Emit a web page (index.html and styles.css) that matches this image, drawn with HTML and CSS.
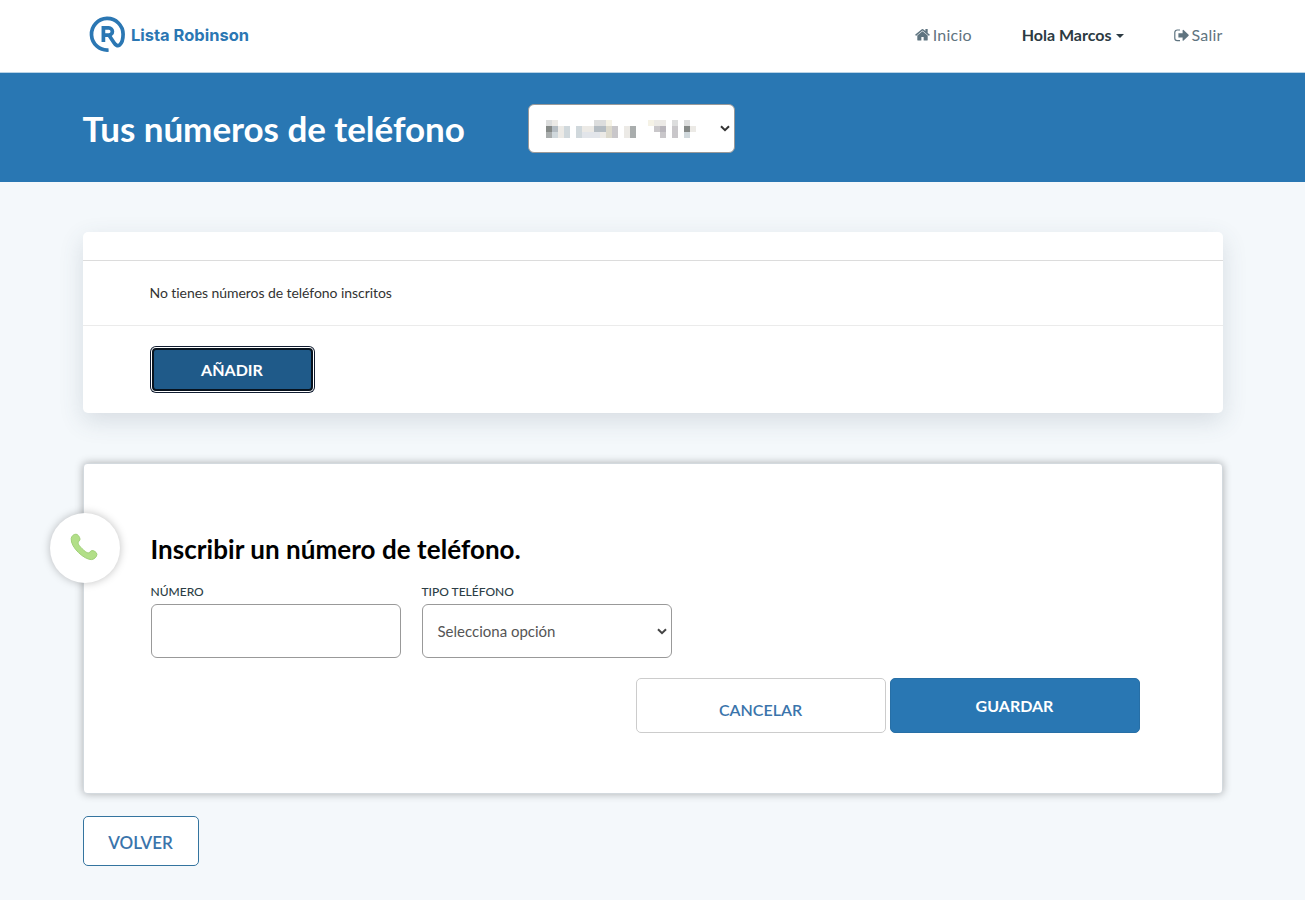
FILE: index.html
```html
<!DOCTYPE html>
<html lang="es">
<head>
 <meta charset="UTF-8">
 <meta name="viewport" content="width=device-width, initial-scale=1.0">
 <title>Lista Robinson - Tus números de teléfono</title>
 <link rel="stylesheet" href="styles.css">
</head>
<body>
<header class="navbar">
 <div class="container navbar-inner">
   <a class="brand" href="#">
     <svg width="166" height="40" viewBox="0 0 166 40">
       <path d="M19.6 36 A15.8 15.8 0 1 1 34.1 20.3 C34.1 25 32.8 29.2 30.6 31 C28.4 32.4 26.4 31 25 28.8 L20.2 21.5" fill="none" stroke="#2b77b3" stroke-width="3.7"/>
       <path d="M14.4 28 V13.9 H19.8 A3.6 3.6 0 0 1 19.8 21.1 H14.4" fill="none" stroke="#2b77b3" stroke-width="3.7"/>
       <text class="brand-text" x="42" y="27" textLength="118" lengthAdjust="spacingAndGlyphs">Lista Robinson</text>
     </svg>
   </a>
   <nav class="menu">
     <a class="menu-link" href="#">
       <svg width="15" height="14" viewBox="0 0 1664 1400">
         <path fill="currentColor" d="M1408 768v480q0 26-19 45t-45 19H960V928H704v384H320q-26 0-45-19t-19-45V768L832 290zm223-69l-62 74q-8 9-21 11h-3q-13 0-21-7L832 200 140 777q-12 8-24 7-13-2-21-11l-62-74q-8-10-7-23t11-21L756 56q32-26 76-26t76 26l244 204V65q0-14 9-23t23-9h192q14 0 23 9t9 23v408l219 182q10 8 11 21t-7 23z"/>
       </svg>
       Inicio
     </a>
     <a class="menu-link user" href="#">Hola Marcos<span class="caret"></span></a>
     <a class="menu-link" href="#">
       <svg width="15" height="13" viewBox="0 0 15 13">
         <path fill="none" stroke="currentColor" stroke-width="1.2" d="M6 1H3.2A2.4 2.4 0 0 0 .8 3.4v5.8a2.4 2.4 0 0 0 2.4 2.4H6"/>
         <path fill="currentColor" d="M4.4 4.2H8.6V1.2q.3-.7 1-.2l5 4.8q.4.5 0 1l-5 4.8q-.7.5-1-.2V8.4H4.4z"/>
       </svg>
       Salir
     </a>
   </nav>
 </div>
</header>

<section class="banner">
 <div class="container banner-inner">
   <h1>Tus números de teléfono</h1>
   <div class="select user-select">
     <svg class="hidden-name" width="156" height="18" viewBox="0 0 26 3" shape-rendering="crispEdges">
       <path fill="#dcdddd" d="M1 0h1v1h-1zM9 0h2v1h-2zM22 0h1v1h-1zM24 0h1v1h-1z"/>
       <path fill="#858987" d="M1 1h1v1h-1zM24 1h1v1h-1z"/>
       <path fill="#a9adad" d="M1 2h1v1h-1zM15 1h1v2h-1z"/>
       <path fill="#b4bcc2" d="M2 1h1v1h-1zM9 1h2v1h-2z"/>
       <path fill="#d0d8dc" d="M2 2h1v1h-1zM4 1h1v2h-1zM6 1h1v2h-1zM24 2h1v1h-1z"/>
       <path fill="#eceae6" d="M3 1h1v2h-1zM7 1h2v1h-2zM10 2h1v1h-1zM14 1h1v2h-1zM2 0h1v1h-1zM19 0h2v1h-2zM25 1h1v1h-1z"/>
       <path fill="#e2e5ea" d="M7 2h3v1h-3z"/>
       <path fill="#dcd9cc" d="M11 1h1v2h-1z"/>
       <path fill="#c9c7ca" d="M12 1h1v2h-1zM19 1h1v1h-1zM20 2h1v1h-1zM22 1h1v2h-1z"/>
       <path fill="#f5f2e6" d="M18 0h1v1h-1zM11 0h1v1h-1z"/>
       <path fill="#b9b6bc" d="M20 1h1v1h-1z"/>
     </svg>
     <svg class="arrow" width="10" height="7" viewBox="0 0 10 7"><path d="M1 1.2 5 5.2 9 1.2" fill="none" stroke="#333" stroke-width="2"/></svg>
   </div>
 </div>
</section>

<main class="container">
 <div class="card list-card">
   <div class="list-head"></div>
   <div class="list-row">No tienes números de teléfono inscritos</div>
   <div class="list-actions">
     <button class="btn btn-add">AÑADIR</button>
   </div>
 </div>

 <div class="card form-card">
   <div class="badge">
     <svg width="28" height="28" viewBox="0 0 28 28">
       <path fill="#b2df88" stroke="#a0d078" stroke-width="1" d="M1.2 5.6C1.6 3 3.5 1.2 6 1.2C8 1.2 9.7 4 10 6C10.2 7.8 8 8.3 8 10C8.2 12.5 15.5 19.5 18 20C19.8 20.3 20 18 21.8 17.6C23.6 17.2 27 19.3 26.9 21.4C26.8 24 24 26.4 21.4 26.6C14.5 26.8.4 14.5 1.2 5.6z"/>
     </svg>
   </div>
   <h2>Inscribir un número de teléfono.</h2>
   <form>
     <div class="fields">
       <div class="field">
         <label for="numero">NÚMERO</label>
         <input type="text" id="numero" class="control">
       </div>
       <div class="field">
         <label>TIPO TELÉFONO</label>
         <div class="select control">
           <span>Selecciona opción</span>
           <svg class="arrow" width="10" height="7" viewBox="0 0 10 7"><path d="M1 1.2 5 5.2 9 1.2" fill="none" stroke="#444" stroke-width="2"/></svg>
         </div>
       </div>
     </div>
     <div class="form-actions">
       <button type="button" class="btn btn-cancel">CANCELAR</button>
       <button type="button" class="btn btn-save">GUARDAR</button>
     </div>
   </form>
 </div>

 <a class="btn btn-back" href="#">VOLVER</a>
</main>
</body>
</html>
```
FILE: styles.css
```css
* {
  box-sizing: border-box;
}
body {
  margin: 0;
  font-family: Lato, sans-serif;
  font-size: 16px;
  font-variant-ligatures: none;
  background-color: #f4f8fb;
  color: #333;
}
.container {
  width: 1140px;
  margin: 0 auto;
}
.navbar {
  height: 73px;
  background-color: #fff;
  border-bottom: 1px solid #b9d3e6;
}
.navbar-inner {
  display: flex;
  justify-content: space-between;
  padding-top: 14px;
}
.brand {
  display: block;
  margin-left: 6px;
  height: 40px;
}
.brand-text {
  font-family: Inter, sans-serif;
  font-size: 16.5px;
  font-weight: 700;
  fill: #2b77b3;
}
.menu {
  display: flex;
  gap: 50px;
  padding-top: 8px;
}
.menu-link {
  display: flex;
  align-items: center;
  gap: 3px;
  height: 25px;
  color: #5f7480;
  letter-spacing: 0.2px;
  text-decoration: none;
}
.menu-link svg {
  margin-top: 1px;
}
.menu-link.user {
  color: #2c3a42;
  font-weight: 700;
  letter-spacing: 0;
}
.caret {
  margin: 3px 0 0 1px;
  border: 4px solid transparent;
  border-top-color: #2c3a42;
  border-bottom: 0;
}
.banner {
  height: 109px;
  background-color: #2977b3;
}
.banner-inner {
  display: flex;
  align-items: flex-start;
  padding-top: 31px;
}
.banner h1 {
  width: 445px;
  margin: 2px 0 0;
  font-size: 35px;
  line-height: 44px;
  font-weight: 700;
  letter-spacing: -0.04px;
  color: #fff;
  white-space: nowrap;
}
.select {
  display: flex;
  align-items: center;
  justify-content: space-between;
  background-color: #fff;
  border: 1px solid #999;
  border-radius: 6px;
}
.user-select {
  width: 207px;
  height: 49px;
  padding: 0 4px 0 11px;
}
.card {
  background-color: #fff;
  border-radius: 5px;
}
.list-card {
  height: 181px;
  margin-top: 50px;
  box-shadow: 0 8px 24px rgba(60, 80, 100, 0.16);
}
.list-head {
  height: 29px;
  border-bottom: 1px solid #dcdcdc;
}
.list-row {
  height: 65px;
  padding-left: 67px;
  border-bottom: 1px solid #ebebeb;
  font-size: 14px;
  line-height: 64px;
  letter-spacing: -0.06px;
}
.list-actions {
  padding: 22px 69px;
}
.btn {
  font-family: Lato, sans-serif;
  font-size: 16px;
  font-weight: 700;
  border-radius: 5px;
  text-decoration: none;
  cursor: pointer;
}
.btn-add {
  display: block;
  width: 161px;
  height: 43px;
  color: #fff;
  background-color: #1f5a89;
  border: 2px solid #07121d;
  border-radius: 4px;
  box-shadow: 0 0 0 1px #fff, 0 0 0 2px #101c30;
}
.form-card {
  position: relative;
  height: 331px;
  margin-top: 50px;
  padding: 69px 82px 0 67px;
  border: 1px solid #d3d9de;
  border-radius: 4px;
  box-shadow: 0 0 8px rgba(0, 0, 0, 0.3);
}
.badge {
  position: absolute;
  left: -34px;
  top: 49px;
  display: flex;
  align-items: center;
  justify-content: center;
  width: 70px;
  height: 70px;
  padding: 0 2px 2px 0;
  border-radius: 50%;
  background-color: #fff;
  box-shadow: 0 0 8px rgba(0, 0, 0, 0.25);
}
.form-card h2 {
  margin: 0;
  font-size: 26px;
  line-height: 32px;
  font-weight: 700;
  letter-spacing: 0.05px;
  color: #000;
}
.fields {
  display: flex;
  gap: 21px;
  margin-top: 19px;
}
.field {
  width: 250px;
}
.field label {
  display: block;
  font-size: 12px;
  line-height: 16px;
  font-weight: 500;
  color: #2c3e46;
}
.control {
  width: 250px;
  height: 54px;
  margin-top: 4px;
  padding: 0 4px 0 15px;
  border: 1px solid #999;
  border-radius: 6px;
  font-size: 15px;
  color: #555;
}
.form-actions {
  display: flex;
  justify-content: flex-end;
  gap: 4px;
  margin-top: 20px;
}
.btn-cancel,
.btn-save {
  width: 250px;
  height: 55px;
}
.btn-cancel {
  padding-top: 8px;
  color: #3a74ab;
  background-color: #fff;
  border: 1px solid #ccc;
  font-weight: 600;
}
.btn-save {
  color: #fff;
  background-color: #2977b3;
  border: 1px solid #276fa6;
}
.btn-back {
  display: block;
  width: 116px;
  height: 50px;
  margin-top: 22px;
  padding-top: 2px;
  border: 1px solid #34749f;
  background-color: #fff;
  color: #3a74ab;
  font-size: 17px;
  font-weight: 600;
  line-height: 47px;
  text-align: center;
}
```
